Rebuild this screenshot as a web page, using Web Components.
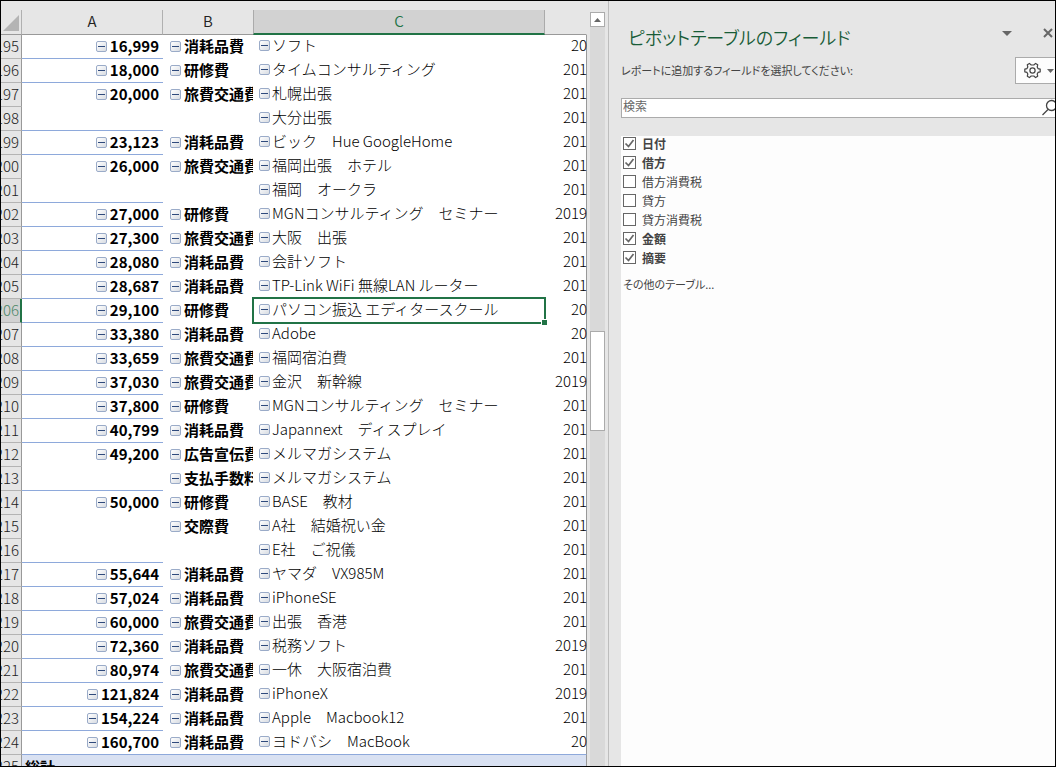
<!DOCTYPE html>
<html lang="ja">
<head>
<meta charset="utf-8">
<title>ピボットテーブル</title>
<style>
  html, body { height: 100%; }
  body { margin: 0; font-family: "Noto Sans CJK JP", "Noto Sans", sans-serif; color: #000; }
</style>
</head>
<body>
<excel-window>
  <pivot-sheet slot="sheet"></pivot-sheet>
  <sheet-scrollbar slot="scroll"></sheet-scrollbar>
  <field-pane slot="pane">
    <span slot="title">ピボットテーブルのフィールド</span>
    <field-item checked>日付</field-item>
    <field-item checked>借方</field-item>
    <field-item>借方消費税</field-item>
    <field-item>貸方</field-item>
    <field-item>貸方消費税</field-item>
    <field-item checked>金額</field-item>
    <field-item checked>摘要</field-item>
  </field-pane>
</excel-window>

<script>
const define = (name, html, setup) => {
  const template = document.createElement('template');
  template.innerHTML = html;
  customElements.define(name, class extends HTMLElement {
    constructor() {
      super();
      this.attachShadow({ mode: 'open' }).append(template.content.cloneNode(true));
    }
    connectedCallback() { if (setup) setup(this, this.shadowRoot); }
  });
};

define('excel-window', `
  <style>
    :host { display: grid; grid-template-columns: minmax(0, 586fr) 22px minmax(0, 446fr); grid-template-rows: minmax(0, 1fr);
      box-sizing: border-box; height: 100vh; border: 1px solid #000; background: #e6e6e6; overflow: hidden; }
    ::slotted(*) { min-height: 0; }
  </style>
  <slot name="sheet"></slot><slot name="scroll"></slot><slot name="pane"></slot>`);

define('collapse-button', `
  <style>
    :host { display: block; flex: none; width: 11px; height: 11px; }
    button { display: grid; place-items: center; box-sizing: border-box; width: 11px; height: 11px; padding: 0;
      border: 1px solid #9aabc8; border-radius: 2px; background: linear-gradient(135deg, #fff, #d8dce2); }
    i { width: 7px; height: 1px; background: #2f4a7c; }
  </style>
  <button type="button" aria-label="折りたたむ"><i></i></button>`);

/* row: [number, amount, account, description, date, line under the amount] */
const rows = [
  [195, '16,999', '消耗品費', 'ソフト', '20', 1],
  [196, '18,000', '研修費', 'タイムコンサルティング', '201', 1],
  [197, '20,000', '旅費交通費', '札幌出張', '201', 0],
  [198, '', '', '大分出張', '201', 1],
  [199, '23,123', '消耗品費', 'ビック　Hue GoogleHome', '201', 1],
  [200, '26,000', '旅費交通費', '福岡出張　ホテル', '201', 0],
  [201, '', '', '福岡　オークラ', '201', 1],
  [202, '27,000', '研修費', 'MGNコンサルティング　セミナー', '2019', 1],
  [203, '27,300', '旅費交通費', '大阪　出張', '201', 1],
  [204, '28,080', '消耗品費', '会計ソフト', '201', 1],
  [205, '28,687', '消耗品費', 'TP-Link WiFi 無線LAN ルーター', '201', 1],
  [206, '29,100', '研修費', 'パソコン振込 エディタースクール', '20', 1],
  [207, '33,380', '消耗品費', 'Adobe', '20', 1],
  [208, '33,659', '旅費交通費', '福岡宿泊費', '201', 1],
  [209, '37,030', '旅費交通費', '金沢　新幹線', '2019', 1],
  [210, '37,800', '研修費', 'MGNコンサルティング　セミナー', '201', 1],
  [211, '40,799', '消耗品費', 'Japannext　ディスプレイ', '201', 1],
  [212, '49,200', '広告宣伝費', 'メルマガシステム', '201', 0],
  [213, '', '支払手数料', 'メルマガシステム', '201', 1],
  [214, '50,000', '研修費', 'BASE　教材', '201', 0],
  [215, '', '交際費', 'A社　結婚祝い金', '201', 0],
  [216, '', '', 'E社　ご祝儀', '201', 1],
  [217, '55,644', '消耗品費', 'ヤマダ　VX985M', '201', 1],
  [218, '57,024', '消耗品費', 'iPhoneSE', '201', 1],
  [219, '60,000', '旅費交通費', '出張　香港', '201', 1],
  [220, '72,360', '消耗品費', '税務ソフト', '2019', 1],
  [221, '80,974', '旅費交通費', '一休　大阪宿泊費', '201', 1],
  [222, '121,824', '消耗品費', 'iPhoneX', '2019', 1],
  [223, '154,224', '消耗品費', 'Apple　Macbook12', '201', 1],
  [224, '160,700', '消耗品費', 'ヨドバシ　MacBook', '20', 1],
];
const selectedRow = 206;

define('pivot-sheet', `
  <style>
    :host { display: block; padding-top: 9px; overflow: hidden; font-size: 15px; }
    table { width: 100%; table-layout: fixed; border-collapse: separate; border-spacing: 0; background: #fff; }
    .n { width: 21px; } .a { width: 141px; } .b { width: 90px; } .d { width: 42px; }
    th, td { box-sizing: border-box; height: 24px; padding: 0; font-weight: 400; vertical-align: top; }
    td:last-child, thead th:last-child { border-right: 1px solid #999; }
    thead th { height: 25px; background: #e6e6e6; border-bottom: 1px solid #999; line-height: 22px; color: #222; font-weight: 350; }
    thead th.sep { border-right: 1px solid #b0b0b0; }
    thead th.on { background: #d2d2d2; border-bottom: 2px solid #217346; border-left: 1px solid #ababab; border-right: 1px solid #ababab; color: #217346; }
    thead th:last-child { border-right-color: #e6e6e6; }
    thead th:first-child { border-right: 1px solid #b0b0b0; }
    thead svg { display: block; margin: 4px 0 0 1px; }
    tbody th { background: #e6e6e6; border-right: 1px solid #999; border-bottom: 1px solid #b4b4b4; color: #222; font-weight: 300; }
    tbody th.on { background: #d2d2d2; border-right: 2px solid #217346; color: #4d8868; }
    .cell { display: flex; align-items: center; box-sizing: border-box; height: 23px; overflow: hidden; white-space: nowrap; line-height: 20px; }
    .cell span { padding-bottom: 2px; }
    .num { justify-content: flex-end; padding-right: 2px; }
    .on .num { padding-right: 1px; }
    .amount { justify-content: flex-end; gap: 3px; padding-right: 4px; font-weight: 700; }
    .account { gap: 3px; padding-left: 7px; font-weight: 700; }
    .text { gap: 2px; padding: 0 0 2px 6px; font-weight: 300; }
    .date { justify-content: flex-end; margin-right: -1px; padding-bottom: 2px; font-weight: 300; }
    td.line { border-bottom: 1px solid #8ea9db; }
    td.sel { position: relative; }
    td.sel::before { content: ""; position: absolute; inset: -2px -1px -1px -1px; border: 2px solid #217346; }
    td.sel::after { content: ""; position: absolute; right: -2px; bottom: -2px; width: 5px; height: 5px;
      border: 1px solid #fff; border-width: 1px 0 0 1px; background: #217346; }
    tfoot th, tfoot td { height: 24px; }
    tfoot th { background: #e6e6e6; border-right: 1px solid #999; font-weight: 300; color: #222; }
    tfoot td { background: #d9e1f2; }
    tfoot .account { padding-left: 3px; }
    tbody tr:last-child td { border-bottom: 1px solid #8ea9db; }
  </style>
  <table>
    <colgroup><col class="n"><col class="a"><col class="b"><col><col class="d"></colgroup>
    <thead><tr>
      <th aria-label="すべて選択"><svg width="18" height="18"><path d="M17 1V17H1Z" fill="#b4b4b4"/></svg></th>
      <th class="sep" scope="col">A</th><th scope="col">B</th><th class="on" scope="col">C</th><th></th>
    </tr></thead>
    <tbody></tbody>
    <tfoot><tr><th scope="row"><div class="cell num"><span>225</span></div></th>
      <td><div class="cell account">総計</div></td><td></td><td></td><td></td></tr></tfoot>
  </table>`, (host, root) => {
  const cell = (kind, text) => `<div class="cell ${kind}">${text ? `<collapse-button></collapse-button><span>${text}</span>` : ''}</div>`;
  root.querySelector('tbody').innerHTML = rows.map(([n, amount, account, text, date, line]) => {
    const on = n === selectedRow;
    return `<tr><th scope="row" class="${on ? 'on' : ''}"><div class="cell num"><span>${n}</span></div></th>
      <td class="${line ? 'line' : ''}">${cell('amount', amount)}</td>
      <td>${cell('account', account)}</td>
      <td class="${on ? 'sel' : ''}">${cell('text', text)}</td>
      <td><div class="cell date"><span>${date}</span></div></td></tr>`;
  }).join('');
});

define('sheet-scrollbar', `
  <style>
    :host { display: grid; grid-template-rows: 15px 304fr 100fr 335fr; padding: 11px 3px 0; border-right: 1px solid #bdbdbd;
      background: linear-gradient(#d9d9d9, #d9d9d9) 3px 11px / 15px 100% no-repeat; }
    button { display: grid; place-items: center; box-sizing: border-box; width: 15px; height: 15px; padding: 0; border: 1px solid #ababab; background: #fff; }
    .thumb { grid-row: 3; box-sizing: border-box; width: 15px; border: 1px solid #ababab; background: #fff; }
  </style>
  <button type="button" aria-label="上へスクロール"><svg width="7" height="4"><path d="M0 4 3.5 0 7 4Z" fill="#666"/></svg></button>
  <div class="thumb"></div>`);

define('field-pane', `
  <style>
    :host { display: flex; flex-direction: column; box-sizing: border-box; padding: 21px 0 0 12px; overflow: hidden; font-size: 12px; color: #444; }
    header { display: flex; align-items: flex-start; height: 35px; padding-left: 7px; }
    h2 { flex: 1; margin: 0; font-size: 18px; line-height: 30px; font-weight: 350; font-feature-settings: "palt"; color: #185c37; white-space: nowrap; }
    button { flex: none; padding: 0; border: 0; background: none; }
    header button { height: 22px; }
    header svg { display: block; }
    .menu { width: 10px; margin-right: 31px; }
    .close { width: 10px; margin-right: 2px; }
    .intro { display: flex; justify-content: space-between; height: 41px; }
    p { margin: 0; font-size: 11px; line-height: 26px; font-feature-settings: "palt"; white-space: nowrap; }
    .tools { display: flex; align-items: center; gap: 6px; box-sizing: border-box; width: 40px; height: 27px; padding-left: 8px;
      border: 1px solid #ababab; border-right: 0; background: #fdfdfd; }
    .search { display: flex; align-items: center; box-sizing: border-box; height: 20px; border: 1px solid #ababab; border-right: 0; background: #fff; }
    input { flex: 1; min-width: 0; padding: 0 0 4px 1px; border: 0; outline: 0; background: none; font: 12px/14px "Noto Sans CJK JP", sans-serif; }
    input::placeholder { color: #666; opacity: 1; }
    .search button { width: 13px; height: 18px; }
    .list { flex: 1; margin-top: 18px; padding: 0 2px; background: #fdfdfd; }
    a { display: block; padding: 6px 0 0; font-size: 11px; line-height: 18px; color: #444; text-decoration: none; font-feature-settings: "palt"; }
  </style>
  <header>
    <h2><slot name="title"></slot></h2>
    <button class="menu" type="button" aria-label="作業ウィンドウ オプション"><svg width="10" height="22"><path d="M0 9H10L5 14Z" fill="#666"/></svg></button>
    <button class="close" type="button" aria-label="閉じる"><svg width="10" height="22"><path d="M1 7 9 15M9 7 1 15" stroke="#666" stroke-width="2"/></svg></button>
  </header>
  <div class="intro">
    <p>レポートに追加するフィールドを選択してください:</p>
    <button class="tools" type="button" aria-label="ツール">
      <svg width="17" height="17" viewBox="0 0 17 17" fill="none" stroke="#444" stroke-width="1.2" stroke-linejoin="round"><path d="M0.8 7.2 3 6.6 3.8 5 3.3 2.8 5.4 1.4 7.2 3H9.8L11.6 1.4 13.7 2.8 13.2 5 14 6.6 16.2 7.2V9.8L14 10.4 13.2 12 13.7 14.2 11.6 15.6 9.8 14H7.2L5.4 15.6 3.3 14.2 3.8 12 3 10.4 0.8 9.8Z"/><circle cx="8.5" cy="8.5" r="2.6"/></svg>
      <svg width="7" height="4"><path d="M0 0H7L3.5 4Z" fill="#666"/></svg>
    </button>
  </div>
  <div class="search">
    <input type="text" placeholder="検索" aria-label="検索">
    <button type="button" aria-label="検索を実行"><svg width="13" height="18" fill="none" stroke="#444" stroke-width="1.3"><circle cx="9.5" cy="6.5" r="5"/><path d="M6 10.5 0.5 16"/></svg></button>
  </div>
  <div class="list">
    <slot></slot>
    <a href="#tables">その他のテーブル...</a>
  </div>`);

define('field-item', `
  <style>
    :host { display: block; }
    label { display: flex; align-items: center; gap: 6px; height: 19px; line-height: 14px; }
    :host([checked]) label { font-weight: 700; }
    label > div { padding-bottom: 4px; }
    input { appearance: none; box-sizing: border-box; flex: none; width: 13px; height: 13px; margin: 0 0 4px; border: 1px solid #666; background: #fff; }
    input:checked { background: #fff url("data:image/svg+xml,%3Csvg xmlns='http://www.w3.org/2000/svg' width='11' height='11'%3E%3Cpath d='M1.5 5.5 4.5 8.5 9.5 2' fill='none' stroke='%23666' stroke-width='1.7'/%3E%3C/svg%3E") no-repeat; }
  </style>
  <label><input type="checkbox"><div><slot></slot></div></label>`, (host, root) => {
  root.querySelector('input').checked = host.hasAttribute('checked');
});
</script>
</body>
</html>
